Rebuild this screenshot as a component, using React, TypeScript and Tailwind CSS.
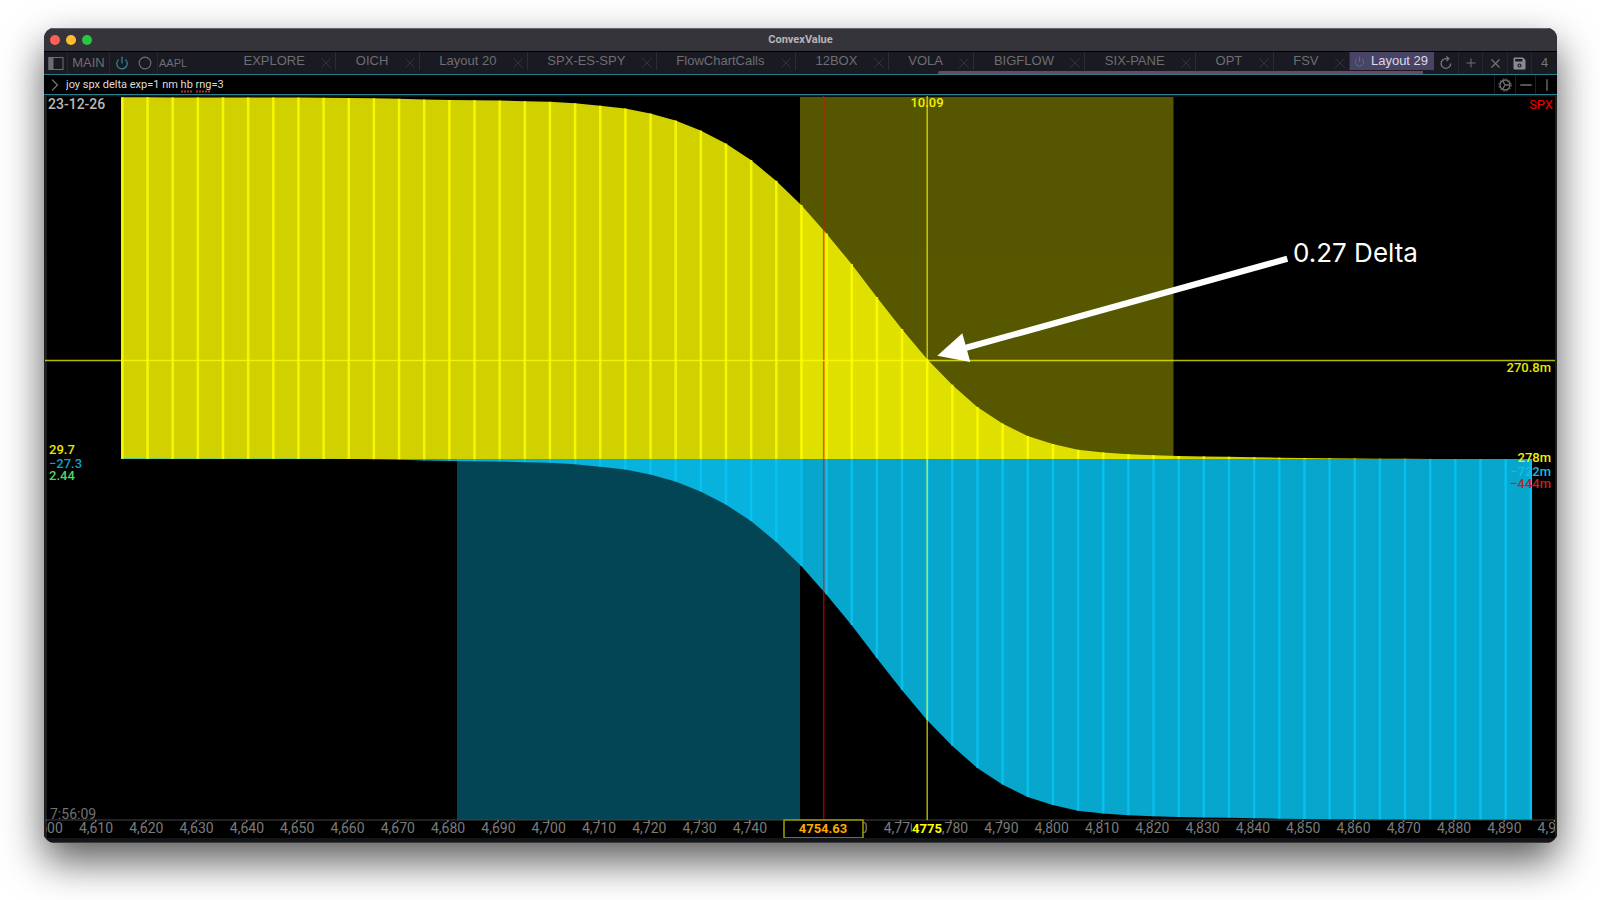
import { ChevronRight, Circle, Minus, Plus, Power, X } from "lucide-react";

const TABS = [
  "EXPLORE",
  "OICH",
  "Layout 20",
  "SPX-ES-SPY",
  "FlowChartCalls",
  "12BOX",
  "VOLA",
  "BIGFLOW",
  "SIX-PANE",
  "OPT",
  "FSV",
];

const STRIKE_START = 4615;
const STRIKE_STEP = 5;

// top edge of the call delta at each strike; the put delta has the same shape one half lower
const CURVE = [
  97.3, 97.3, 97.4, 97.4, 97.4, 97.5, 97.5, 97.6, 97.8, 98, 98.3, 98.8, 99.5, 100, 100.2, 100.6, 101.2, 101.8, 103.2,
  105.7, 108.5, 113.5, 120.5, 130.5, 143.5, 160, 180.7, 205, 233.4, 264, 297, 329, 359, 384.7, 407, 423.5, 436, 444,
  449.8, 452.4, 454.2, 455.2, 456, 456.4, 456.8, 457.3, 457.7, 458, 458.3, 458.5, 458.7, 458.8, 458.9, 459, 459, 459,
  459,
];

const ZERO = 459;
const HALF = 361;
const RIGHT = 1532;
const YELLOW = "#ffff00";
const CYAN = "#08cafa";

const xOf = (strike: number) => 96 + (strike - 4610) * 5.03;

const points = CURVE.map((y, i) => ({ x: xOf(STRIKE_START + i * STRIKE_STEP), y }));
const line = (dy: number) => points.map((p) => `L${p.x + 1} ${p.y + dy}`).join("");

const callPath = `M121 ${ZERO}L121 97.3${line(0)}L${RIGHT} ${ZERO}Z`;
const putPath = `M121 ${ZERO}${line(HALF)}L${RIGHT} ${ZERO + HALF}L${RIGHT} ${ZERO}Z`;

const axisLabels = Array.from({ length: 31 }, (_, i) => 4600 + i * 10);

function Chart() {
  return (
    <svg
      viewBox="44 95 1513 743"
      className="block h-auto w-full bg-black font-[Roboto,sans-serif] text-[13px]"
      role="img"
      aria-label="SPX delta by strike"
    >
      <defs>
        <clipPath id="axis-clip">
          <rect x="46" y="815" width="1509" height="23" />
        </clipPath>
      </defs>
      <path d="M44 95H47V838H44ZM1555 95H1557V838H1555ZM44 95H1557V96.5H44Z" fill="#1f1f20" />

      <rect x="800" y="97" width="373.5" height="362" fill={YELLOW} opacity="0.34" />
      <rect x="457" y="459" width="343" height="361" fill={CYAN} opacity="0.34" />
      <path d={callPath} fill={YELLOW} opacity="0.82" />
      <path d={putPath} fill={CYAN} opacity="0.82" />
      {points.map(({ x, y }) => (
        <g key={x}>
          <rect x={x} y={y} width="2.5" height={Math.max(ZERO - y, 0)} fill={YELLOW} opacity="0.8" />
          <rect x={x} y={ZERO} width="2.5" height={y + HALF - ZERO} fill={CYAN} opacity="0.7" />
        </g>
      ))}

      <path d="M45 820H1555" stroke="#444" />
      <g clipPath="url(#axis-clip)" textAnchor="middle" fill="#7b7b7b" className="text-[14px]">
        {axisLabels.map((strike) => (
          <g key={strike}>
            <rect x={xOf(strike) - 1} y="820" width="1.5" height="2" />
            <text x={xOf(strike)} y="833">
              {strike.toLocaleString("en-US")}
            </text>
          </g>
        ))}
      </g>

      <path d="M823.7 96V820" stroke="#f00" strokeWidth="1.5" opacity="0.62" />
      <path d="M927.2 96V820M45 360.5H1555" stroke={YELLOW} strokeWidth="1.4" opacity="0.72" />

      <rect x="784" y="820" width="79" height="18" fill="#000" stroke="#a9a900" strokeWidth="1.4" />
      <rect x="912" y="822" width="30" height="13" fill="#000" />
      <g textAnchor="middle" className="font-bold">
        <text x="823" y="833" fill="#ffa800">
          4754.63
        </text>
        <text x="927" y="833" fill={YELLOW}>
          4775
        </text>
      </g>
      <text x="927" y="107" textAnchor="middle" fill="#f2f200" className="font-medium">
        10.09
      </text>

      <text x="48" y="109" fill="#b9b9b9" className="text-[14px] font-medium">
        23-12-26
      </text>
      <text x="50" y="819" fill="#707070" className="text-[14px]">
        7:56:09
      </text>
      <g className="font-medium">
        <text x="49" y="454" fill="#e8e800">
          29.7
        </text>
        <text x="49" y="468" fill="#0aa2cc">
          −27.3
        </text>
        <text x="49" y="480" fill="#52d860">
          2.44
        </text>
      </g>
      <g textAnchor="end" className="font-medium">
        <text x="1553" y="109" fill="#f00000" className="font-normal">
          SPX
        </text>
        <text x="1551" y="372" fill="#e8e800">
          270.8m
        </text>
        <text x="1551" y="462" fill="#f0f000">
          278m
        </text>
        <text x="1551" y="476" fill="#10bcec">
          −722m
        </text>
        <text x="1551" y="488" fill="#c42026">
          −444m
        </text>
      </g>

      <path d="M1287.3 258.8L966 347.8" stroke="#fff" strokeWidth="6.2" />
      <path d="M937.3 355.8L962.3 333.3L970.3 362Z" fill="#fff" />
      <text x="1293" y="262" fill="#fff" className="font-[Inter,sans-serif] text-[26px]">
        0.27 Delta
      </text>
    </svg>
  );
}

function TitleBar() {
  return (
    <header className="relative flex h-[23px] items-center justify-center border-t border-[#65646a] bg-[#36343b]">
      <div className="absolute left-[6px] flex gap-[6px]">
        <button aria-label="Close window" className="size-[10px] rounded-full bg-[#ff5f57]" />
        <button aria-label="Minimize window" className="size-[10px] rounded-full bg-[#febc2e]" />
        <button aria-label="Zoom window" className="size-[10px] rounded-full bg-[#28c840]" />
      </div>
      <h1 className="text-[11px] font-bold text-[#b6b5b9]">ConvexValue</h1>
    </header>
  );
}

function TabBar() {
  return (
    <nav className="flex h-[23px] border-t border-black bg-[#1a1a23] font-['Liberation_Sans',sans-serif] text-[#6e6e70]">
      <button aria-label="Toggle sidebar" className="flex w-6 items-center justify-center border-r border-[#262636]">
        <svg viewBox="0 0 16 13" className="h-[13px] w-4" fill="none" stroke="currentColor" strokeWidth="1">
          <rect x="1" y="0.5" width="14" height="12" />
          <rect x="1" y="0.5" width="4" height="12" fill="currentColor" />
        </svg>
      </button>
      <button className="w-[42px] border-r border-[#262636] text-[13px]">MAIN</button>
      <div className="flex w-12 items-center justify-around border-r border-[#262636]">
        <button aria-label="Power" className="text-[#37899a]">
          <Power size={14} />
        </button>
        <button aria-label="Record">
          <Circle size={14} />
        </button>
      </div>
      <button className="w-[66px] pl-px text-left text-[11px]">AAPL</button>
      <div className="flex min-w-0 flex-1 flex-col overflow-hidden">
        <div className="flex h-[18px] text-[13px] leading-[17px]">
          {TABS.map((tab) => (
            <div key={tab} className="flex shrink-0 grow border-r border-[#2b2b3c] pl-[19px]">
              <a href="#" className="mr-3 grow text-center whitespace-nowrap">
                {tab}
              </a>
              <button aria-label={`Close ${tab}`} className="mt-0.5 text-[#35353d]">
                <X size={18} strokeWidth={1.3} />
              </button>
            </div>
          ))}
          <div className="flex w-21 shrink-0 gap-1 bg-[#494366] px-1 whitespace-nowrap text-[#dcdbe2]">
            <Power size={11} className="mt-1 shrink-0 text-[#3a8298]" />
            <a href="#" className="flex-1 text-center">
              Layout 29
            </a>
          </div>
        </div>
        <div className="mt-px mr-[11px] h-[3px] w-[485px] self-end rounded-l-full bg-[#744560]" />
      </div>
      <div className="flex text-[#77777a]">
        <button aria-label="Reload" className="flex w-[25px] items-center justify-center border-r border-[#262636]">
          <svg viewBox="0 0 14 14" className="size-[14px]" fill="none" stroke="currentColor" strokeWidth="1.3">
            <path d="M11.7 7.5A4.8 4.8 0 1 1 7 2.7H9.2M7.4 0.4L9.8 2.7L7.4 5" />
          </svg>
        </button>
        <button aria-label="Add layout" className="flex w-6 items-center justify-center border-r border-[#262636]">
          <Plus size={14} strokeWidth={1.6} />
        </button>
        <button aria-label="Close layout" className="flex w-[25px] items-center justify-center border-r border-[#262636]">
          <X size={15} strokeWidth={1.8} />
        </button>
        <button aria-label="Save layout" className="flex w-6 items-center justify-center border-r border-[#262636]">
          <svg viewBox="0 0 13 13" className="size-[13px]">
            <path
              fill="#8b8b8d"
              fillRule="evenodd"
              d="M1.5 0.5H10L12.5 3V11.5Q12.5 12.5 11.5 12.5H1.5Q0.5 12.5 0.5 11.5V1.5Q0.5 0.5 1.5 0.5ZM2.2 2V4.6H9.4V2ZM6.5 6.4A2.1 2.1 0 1 0 6.5 10.6A2.1 2.1 0 1 0 6.5 6.4ZM6.5 7.6A0.9 0.9 0 1 1 6.5 9.4A0.9 0.9 0 1 1 6.5 7.6Z"
            />
          </svg>
        </button>
        <button className="w-[25px] text-[13px]">4</button>
      </div>
    </nav>
  );
}

function CommandBar() {
  return (
    <div className="flex h-[21px] items-center border-y border-[#2a7f8a] bg-black text-[#6f6f70]">
      <label htmlFor="command" className="flex w-[22px] justify-center">
        <ChevronRight size={20} strokeWidth={1.6} aria-label="Command" />
      </label>
      <div className="relative flex-1">
        <input
          id="command"
          spellCheck={false}
          defaultValue="joy spx delta exp=1 nm hb rng=3"
          className="block w-full bg-transparent font-[Roboto,sans-serif] text-[11px] leading-[17px] text-[#dedede] outline-none"
        />
        {/* spelling marks */}
        <svg viewBox="0 0 160 3" className="pointer-events-none absolute bottom-0 left-0 h-[3px] w-40">
          <path d="M115 1.5H126M130 1.5H145" stroke="#c0272d" strokeWidth="2" strokeDasharray="2 1" />
        </svg>
      </div>
      <button aria-label="Settings" className="flex h-full w-[21px] items-center justify-center border-l border-[#1d1d2a]">
        <svg viewBox="0 0 14 14" className="size-[14px]" fill="none" stroke="currentColor">
          <circle cx="7" cy="7" r="5" strokeWidth="1.5" />
          <circle cx="7" cy="7" r="6.2" strokeDasharray="1.6 1.65" />
          <path d="M7 7H12M7 7L4.5 2.7M7 7L4.5 11.3" strokeWidth="1.3" />
        </svg>
      </button>
      <button aria-label="Split horizontally" className="flex h-full w-5 items-center justify-center border-l border-[#1d1d2a]">
        <Minus size={18} strokeWidth={1.8} />
      </button>
      <button aria-label="Split vertically" className="flex h-full w-[22px] items-center justify-center border-l border-[#1d1d2a]">
        <Minus size={18} strokeWidth={1.8} className="rotate-90" />
      </button>
    </div>
  );
}

export default function App() {
  return (
    <div className="min-h-screen bg-white pt-7 pr-[43px] pb-14 pl-11 font-[Roboto,sans-serif]">
      <main className="overflow-hidden rounded-[10px] bg-[#14161a] shadow-[0_18px_40px_rgba(0,0,0,0.65)]">
        <TitleBar />
        <TabBar />
        <CommandBar />
        <Chart />
        <div className="h-[5px] border-b border-[#3c3c3c]" />
      </main>
    </div>
  );
}
